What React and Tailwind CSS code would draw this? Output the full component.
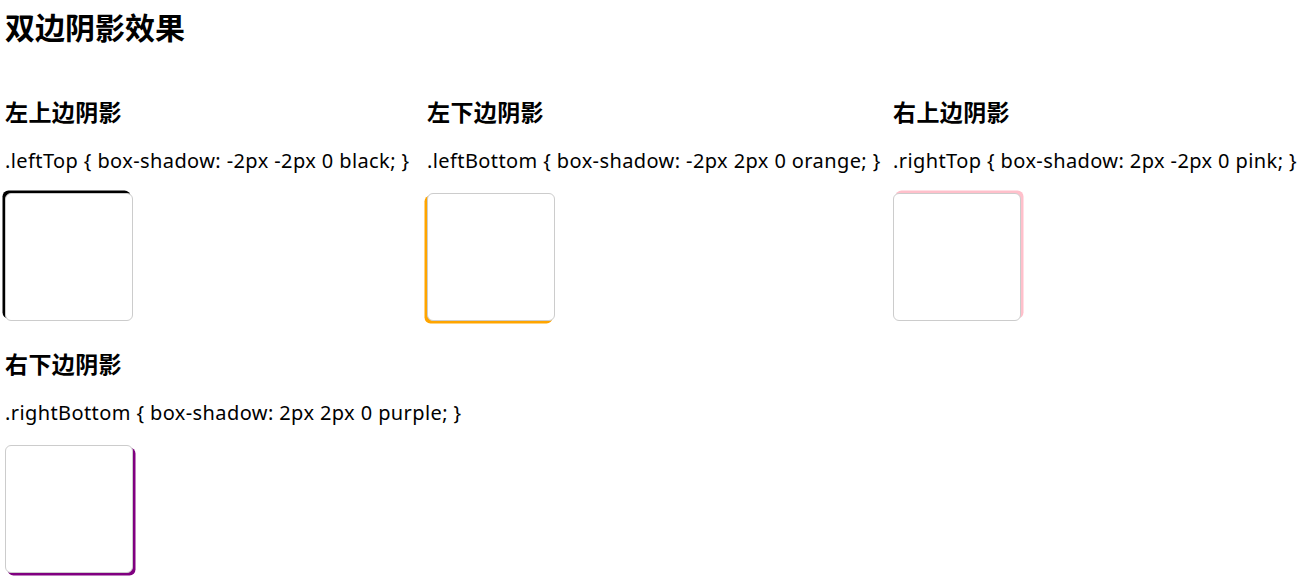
import React from 'react';

const items = [
  { title: '左上边阴影', code: '.leftTop { box-shadow: -2px -2px 0 black; }', width: 'w-[422px]', shadow: 'shadow-[-2.5px_-2.5px_0_black]' },
  { title: '左下边阴影', code: '.leftBottom { box-shadow: -2px 2px 0 orange; }', width: 'w-[466px]', shadow: 'shadow-[-2.5px_2.5px_0_orange]' },
  { title: '右上边阴影', code: '.rightTop { box-shadow: 2px -2px 0 pink; }', width: 'w-[410px]', shadow: 'shadow-[2.5px_-2.5px_0_pink]' },
  { title: '右下边阴影', code: '.rightBottom { box-shadow: 2px 2px 0 purple; }', width: 'w-[422px]', shadow: 'shadow-[2.5px_2.5px_0_purple]' },
];

export default function App() {
  return (
    <div className="min-h-screen bg-white px-[5px] pt-[10px] text-black font-['Noto_Sans','Noto_Sans_CJK_SC',sans-serif]">
      <h2 className="text-[30px] leading-[36px] font-bold">双边阴影效果</h2>

      <div className="mt-[52px] flex flex-wrap gap-y-[29px]">
        {items.map((item) => (
          <div key={item.title} className={item.width}>
            <h3 className="text-[23px] leading-[28px] font-bold tracking-[0.4px]">{item.title}</h3>
            <p className="mt-[23px] text-[20px] leading-[24px] tracking-[0.4px] whitespace-nowrap">{item.code}</p>
            <div className={`mt-[20px] w-[128px] h-[128px] border border-[#ccc] rounded-[6px] bg-white ${item.shadow}`} />
          </div>
        ))}
      </div>
    </div>
  );
}
